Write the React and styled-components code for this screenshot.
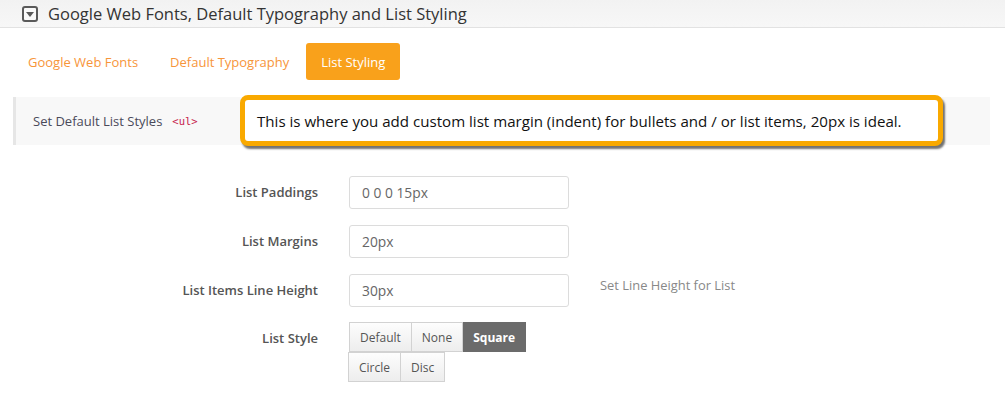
import styled, { createGlobalStyle } from 'styled-components'

const GlobalStyle = createGlobalStyle`
  body {
    margin: 0;
    background: #fff;
    font-family: "Open Sans", "Noto Sans", sans-serif;
  }
`

const Header = styled.div`
  display: flex;
  align-items: center;
  gap: 10px;
  height: 27px;
  padding-left: 22px;
  background: linear-gradient(to bottom, #f2f2f2, #f7f7f7);
  border-bottom: 1px solid #e2e2e2;
`

const Toggle = styled.span`
  box-sizing: border-box;
  width: 16px;
  height: 16px;
  border: 2px solid #5a5a5a;
  border-radius: 3px;
  background: #fafafa;
  display: flex;
  align-items: center;
  justify-content: center;

  &::after {
    content: '';
    border-left: 4px solid transparent;
    border-right: 4px solid transparent;
    border-top: 5px solid #5a5a5a;
    margin-top: 1px;
  }
`

const Title = styled.h2`
  margin: 0;
  font-size: 16.5px;
  font-weight: 400;
  color: #333;
`

const Tabs = styled.div`
  display: flex;
  gap: 2px;
  padding: 15px 0 0 13px;
`

const Tab = styled.button`
  height: 37px;
  padding: 0 15px;
  border: none;
  border-radius: 3px;
  font-family: inherit;
  font-size: 13px;
  cursor: pointer;
  background: ${p => (p.$active ? '#f9a11b' : 'transparent')};
  color: ${p => (p.$active ? '#fff' : '#f7953a')};
`

const Section = styled.div`
  position: relative;
  display: flex;
  align-items: center;
  gap: 10px;
  margin: 17px 15px 0 13px;
  height: 48px;
  padding-left: 17px;
  background: #f8f8f8;
  border-left: 3px solid #e6e6e6;
`

const SectionTitle = styled.span`
  font-size: 13px;
  color: #4a4a5a;
`

const Code = styled.code`
  font-family: "DejaVu Sans Mono", monospace;
  font-size: 10.5px;
  color: #c7254e;
`

const Callout = styled.div`
  position: absolute;
  left: 224px;
  top: -2px;
  width: 703px;
  height: 51px;
  box-sizing: border-box;
  display: flex;
  align-items: center;
  padding-left: 12px;
  background: #fff;
  border: 5px solid #f9a900;
  border-radius: 8px;
  box-shadow: 2px 3px 2px rgba(0, 0, 0, 0.55);
  font-size: 15.1px;
  color: #111;
`

const Form = styled.div`
  display: grid;
  grid-template-columns: 318px 220px auto;
  column-gap: 31px;
  row-gap: 16px;
  margin-top: 31px;
`

const Label = styled.label`
  text-align: right;
  font-size: 13px;
  font-weight: 600;
  color: #555;
  line-height: ${p => (p.$compact ? 30 : 33)}px;
`

const Input = styled.input`
  box-sizing: border-box;
  width: 220px;
  height: 33px;
  padding: 0 12px;
  border: 1px solid #dcdcdc;
  border-radius: 3px;
  font-family: inherit;
  font-size: 13.8px;
  color: #666;
`

const Help = styled.span`
  font-size: 12.9px;
  color: #888;
  line-height: 20px;
  padding-top: 1px;
`

const ButtonSet = styled.div`
  display: flex;
  flex-direction: column;
  grid-column: 2 / 4;
  margin-top: -1px;
`

const ButtonRow = styled.div`
  display: flex;
  margin-left: ${p => p.$shift || 0}px;
`

const Option = styled.button`
  height: 30px;
  padding: 0 10px;
  border: 1px solid #d2d2d2;
  border-left-width: 0;
  border-radius: 0;
  font-family: inherit;
  font-size: 12px;
  font-weight: ${p => (p.$active ? 700 : 400)};
  color: ${p => (p.$active ? '#fff' : '#555')};
  background: ${p => (p.$active ? '#6b6b6b' : 'linear-gradient(to bottom, #fdfdfd, #ededed)')};
  border-color: ${p => (p.$active ? '#6b6b6b' : '#d2d2d2')};
  cursor: pointer;

  &:first-child {
    border-left-width: 1px;
  }
`

const rows = [
  [{ name: 'Default' }, { name: 'None' }, { name: 'Square', active: true }],
  [{ name: 'Circle' }, { name: 'Disc' }],
]

export default function App() {
  return (
    <>
      <GlobalStyle />
      <Header>
        <Toggle />
        <Title>Google Web Fonts, Default Typography and List Styling</Title>
      </Header>
      <Tabs>
        <Tab>Google Web Fonts</Tab>
        <Tab>Default Typography</Tab>
        <Tab $active>List Styling</Tab>
      </Tabs>
      <Section>
        <SectionTitle>Set Default List Styles</SectionTitle>
        <Code>&lt;ul&gt;</Code>
        <Callout>
          This is where you add custom list margin (indent) for bullets and / or list items, 20px is ideal.
        </Callout>
      </Section>
      <Form>
        <Label>List Paddings</Label>
        <Input defaultValue="0 0 0 15px" />
        <span />
        <Label>List Margins</Label>
        <Input defaultValue="20px" />
        <span />
        <Label>List Items Line Height</Label>
        <Input defaultValue="30px" />
        <Help>Set Line Height for List</Help>
        <Label $compact>List Style</Label>
        <ButtonSet>
          {rows.map((row, i) => (
            <ButtonRow key={i} $shift={i ? -1 : 0}>
              {row.map(s => (
                <Option key={s.name} $active={s.active}>{s.name}</Option>
              ))}
            </ButtonRow>
          ))}
        </ButtonSet>
      </Form>
    </>
  )
}
